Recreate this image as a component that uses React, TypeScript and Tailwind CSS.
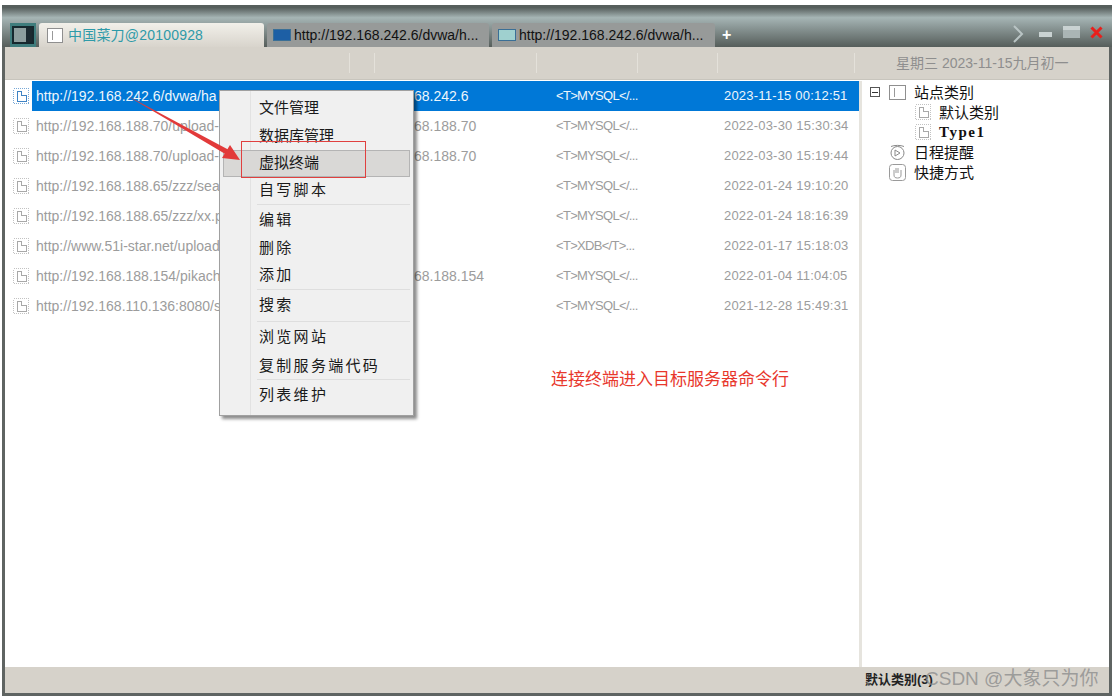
const FONT = "[font-family:'Liberation_Sans','Noto_Sans_CJK_SC',sans-serif]";

const ROWS = [
  { url: "http://192.168.242.6/dvwa/ha", ip: "68.242.6", data: "<T>MYSQL</...", time: "2023-11-15 00:12:51" },
  { url: "http://192.168.188.70/upload-", ip: "68.188.70", data: "<T>MYSQL</...", time: "2022-03-30 15:30:34" },
  { url: "http://192.168.188.70/upload-", ip: "68.188.70", data: "<T>MYSQL</...", time: "2022-03-30 15:19:44" },
  { url: "http://192.168.188.65/zzz/sea", ip: "", data: "<T>MYSQL</...", time: "2022-01-24 19:10:20" },
  { url: "http://192.168.188.65/zzz/xx.p", ip: "", data: "<T>MYSQL</...", time: "2022-01-24 18:16:39" },
  { url: "http://www.51i-star.net/upload", ip: "", data: "<T>XDB</T>...", time: "2022-01-17 15:18:03" },
  { url: "http://192.168.188.154/pikach", ip: "68.188.154", data: "<T>MYSQL</...", time: "2022-01-04 11:04:05" },
  { url: "http://192.168.110.136:8080/s", ip: "", data: "<T>MYSQL</...", time: "2021-12-28 15:49:31" },
];

const MENU = [
  { label: "文件管理", h: "h-[28px]", cls: "" },
  { label: "数据库管理", h: "h-[28px]", cls: "" },
  { label: "虚拟终端", h: "h-[27px]", cls: "", active: true },
  { label: "自写脚本", h: "h-[27px]", cls: "tracking-[2.3px]", sep: true },
  { label: "编辑", h: "h-[30px]", cls: "tracking-[2.3px]" },
  { label: "删除", h: "h-[26px]", cls: "tracking-[2.3px]" },
  { label: "添加", h: "h-[28px]", cls: "tracking-[2.3px]", sep: true },
  { label: "搜索", h: "h-[31px]", cls: "tracking-[2.3px]", sep: true },
  { label: "浏览网站", h: "h-[31px]", cls: "tracking-[2.3px]" },
  { label: "复制服务端代码", h: "h-[26px]", cls: "tracking-[2.3px]", sep: true },
  { label: "列表维护", h: "h-[30px]", cls: "tracking-[2.3px]" },
];

function DocIcon({ color = "#a8a8a8" }: { color?: string }) {
  return (
    <svg width="16" height="16" viewBox="0 0 16 16" fill="none" className="shrink-0" shapeRendering="crispEdges">
      <rect x="0.5" y="0.5" width="15" height="15" stroke={color} strokeOpacity="0.7" strokeDasharray="1 1" />
      <path d="M4 3.5h4.5v4H13v6H4z" stroke={color} />
    </svg>
  );
}

function TabIcon({ color }: { color: string }) {
  return <span className="w-[18px] h-[12px] shrink-0 border border-[#3a6f96]" style={{ background: color }} />;
}

function ListRow({ row, selected }: { row: (typeof ROWS)[number]; selected: boolean }) {
  return (
    <div className="flex items-center h-[30px]">
      <div className="w-[27px] pl-[8px] shrink-0">
        <DocIcon color={selected ? "#3f83c4" : "#a8a8a8"} />
      </div>
      <div className={`flex items-center flex-1 h-full ${selected ? "bg-[#0078d7] text-[#eef6fc]" : "text-[#9c9c9c]"}`}>
        <span className="w-[187px] pl-[4px] shrink-0 whitespace-nowrap text-[14px]">{row.url}</span>
        <span className="w-[337px] pl-[195px] shrink-0 whitespace-nowrap text-[14px]">{row.ip}</span>
        <span className="w-[168px] shrink-0 whitespace-nowrap text-[13px] tracking-[-0.7px]">{row.data}</span>
        <span className="whitespace-nowrap text-[13px] tracking-[0.2px]">{row.time}</span>
      </div>
    </div>
  );
}

function TreeRow({ icon, label, indent, cls = "" }: { icon: React.ReactNode; label: string; indent: string; cls?: string }) {
  return (
    <div className={`flex items-center h-[20px] text-[15px] leading-none text-[#111] ${indent} ${cls}`}>
      {icon}
      <span className="ml-[8px] whitespace-nowrap">{label}</span>
    </div>
  );
}

export default function App() {
  return (
    <div className={`relative w-[1112px] h-[696px] overflow-hidden bg-white ${FONT}`}>
      <div className="h-[5px]" />
      <div className="ml-[2px] h-[691px] flex flex-col border-x-[3px] border-[#5f6462] border-b-[3px] rounded-tl-[3px]">
        {/* title bar */}
        <div className="h-[42px] shrink-0 flex items-end bg-gradient-to-b from-[#565e5c] from-[6%] via-[#a6b5b5] via-[30%] to-[#565e5b] pl-[8px] pr-[9px] -mx-[3px]">
          <div className="w-[26px] h-[24px] flex items-center justify-center bg-[#3f7d7d]">
            <div className="w-[22px] h-[18px] bg-[#8d9e9e] border-[2px] border-[#16282e] flex justify-end">
              <div className="w-[6px] h-full bg-[#1c2a30]" />
            </div>
          </div>
          <div className="ml-[3px] w-[225px] h-[24px] flex items-center pl-[8px] rounded-t-[3px] bg-gradient-to-b from-[#f2f0ea] to-[#d8d4cc]">
            <span className="w-[16px] h-[15px] border border-[#8f8f8f] bg-white flex items-center pl-[4px]">
              <span className="w-px h-[9px] bg-[#999]" />
            </span>
            <span className="ml-[5px] text-[14px] tracking-[0.2px] text-[#2e9aa8] whitespace-nowrap">中国菜刀@20100928</span>
          </div>
          <div className="ml-[3px] w-[222px] h-[24px] flex items-center pl-[6px] rounded-t-[3px] bg-[#979a99] text-[14px] text-[#111]">
            <TabIcon color="#1d5fa5" />
            <span className="ml-[3px] whitespace-nowrap">http://192.168.242.6/dvwa/h...</span>
          </div>
          <div className="ml-[3px] w-[223px] h-[24px] flex items-center pl-[6px] rounded-t-[3px] bg-[#979a99] text-[14px] text-[#111]">
            <TabIcon color="#9fd0cf" />
            <span className="ml-[3px] whitespace-nowrap">http://192.168.242.6/dvwa/h...</span>
          </div>
          <span className="ml-[7px] mb-[1px] text-white font-bold text-[16px] leading-[22px]">+</span>
          <div className="ml-auto h-[25px] flex items-start pt-[3px]">
            <svg width="11" height="18" viewBox="0 0 11 18" fill="none">
              <path d="M1 1l8 8-8 8" stroke="#b9c4c4" strokeWidth="2" />
            </svg>
            <span className="ml-[15px] mt-[7px] w-[13px] h-[5px] bg-[#c9d2d2]" />
            <span className="ml-[11px] mt-[1px] w-[17px] h-[12px] bg-[#aab5b5] border-t-[4px] border-[#c9d2d2]" />
            <svg width="13" height="13" viewBox="0 0 13 13" fill="none" className="ml-[10px] mt-[1px]">
              <path d="M1.5 1.5l10 10M11.5 1.5l-10 10" stroke="#e8201c" strokeWidth="3" />
            </svg>
          </div>
        </div>

        {/* toolbar */}
        <div className="h-[32px] shrink-0 flex items-center bg-[#d6d2ca] text-[14px] text-[#8e8e8e]">
          <div className="w-[345px] h-[20px] border-r border-[#e4e1da]" />
          <div className="w-[25px] h-[20px] border-r border-[#e4e1da]" />
          <div className="w-[162px] h-[20px] border-r border-[#e4e1da]" />
          <div className="w-[101px] h-[20px] border-r border-[#e4e1da]" />
          <div className="w-[80px] h-[20px] border-r border-[#e4e1da]" />
          <div className="w-[137px] h-[20px] border-r border-[#e4e1da]" />
          <span className="ml-[41px] whitespace-nowrap">星期三 2023-11-15九月初一</span>
        </div>

        {/* panels */}
        <div className="flex-1 flex bg-white border-t-[1px] border-[#c8c5bd] pt-[1px] min-h-0">
          <div className="w-[857px] shrink-0 flex flex-col border-r-[3px] border-[#e6e4de]">
            {ROWS.map((row, i) => (
              <ListRow key={row.time} row={row} selected={i === 0} />
            ))}
          </div>
          <div className="flex-1 pt-[1px] pl-[8px]">
            <div className="flex items-center h-[20px] text-[15px] leading-none text-[#111]">
              <span className="w-[10px] h-[10px] border border-[#555] flex items-center justify-center">
                <span className="w-[6px] h-px bg-[#333]" />
              </span>
              <span className="ml-[9px] w-[17px] h-[15px] border border-[#8f8f8f] flex items-center pl-[4px]">
                <span className="w-px h-[9px] bg-[#999]" />
              </span>
              <span className="ml-[8px] whitespace-nowrap">站点类别</span>
            </div>
            <TreeRow icon={<DocIcon />} label="默认类别" indent="pl-[45px]" />
            <TreeRow icon={<DocIcon />} label="Type1" indent="pl-[45px]" cls="text-[12px] tracking-[1.5px] [font-family:'Liberation_Serif',serif] font-bold" />
            <TreeRow
              icon={
                <svg width="17" height="17" viewBox="0 0 17 17" fill="none" className="shrink-0">
                  <circle cx="8.5" cy="9" r="6.5" stroke="#8a8a8a" />
                  <path d="M2 2.5c3-1.5 10-1.5 13 0M6 6l5 3-5 3z" stroke="#8a8a8a" />
                </svg>
              }
              label="日程提醒"
              indent="pl-[19px]"
            />
            <TreeRow
              icon={
                <svg width="17" height="17" viewBox="0 0 17 17" fill="none" className="shrink-0">
                  <rect x="0.5" y="0.5" width="16" height="16" rx="3" stroke="#9a9a9a" />
                  <path d="M5 6v5c0 2 1 3 3.5 3s3.5-1 3.5-3V6M7 4v5M9 4v5" stroke="#9a9a9a" />
                </svg>
              }
              label="快捷方式"
              indent="pl-[19px]"
            />
          </div>
        </div>

        {/* status bar */}
        <div className="h-[26px] shrink-0 flex items-center bg-[#d6d2ca] pl-[860px] text-[13px] text-[#222] font-bold">
          默认类别(3)
        </div>
      </div>

      {/* context menu */}
      <div className="absolute left-[219px] top-[90px] w-[195px] h-[326px] flex flex-col pt-[3px] px-[3px] bg-[#f0f0f0] border border-[#a0a0a0] shadow-[3px_3px_3px_rgba(0,0,0,0.45)] text-[15px] text-[#1a1a1a]">
        <span className="absolute left-[30px] top-0 bottom-0 w-px bg-[#e2e2e2]" />
        {MENU.map((item) => (
          <div key={item.label} className="relative">
            <div className={`${item.h} flex items-center whitespace-nowrap ${item.active ? "bg-[#d9d8d6] border border-[#b4b4b4] pl-[35px]" : "pl-[36px]"} ${item.cls}`}>
              {item.label}
            </div>
            {item.sep && <div className="ml-[34px] h-px bg-[#dedede]" />}
          </div>
        ))}
      </div>

      {/* annotations */}
      <svg className="absolute left-[120px] top-[90px]" width="250" height="90" viewBox="0 0 250 90" fill="none">
        <rect x="121.5" y="51.5" width="124" height="36" stroke="#e0403f" />
        <path d="M5 4.5L109 60L107 65z" fill="#e23a3a" />
        <path d="M120 70L102 68L110 55z" fill="#e23a3a" />
      </svg>
      <span className="absolute left-[551px] top-[367px] text-[17px] text-[#e8372c] whitespace-nowrap">连接终端进入目标服务器命令行</span>
      <span className="absolute left-[925px] top-[665px] text-[19px] text-[#8d8d8d]/80 whitespace-nowrap">CSDN @大象只为你</span>
    </div>
  );
}
